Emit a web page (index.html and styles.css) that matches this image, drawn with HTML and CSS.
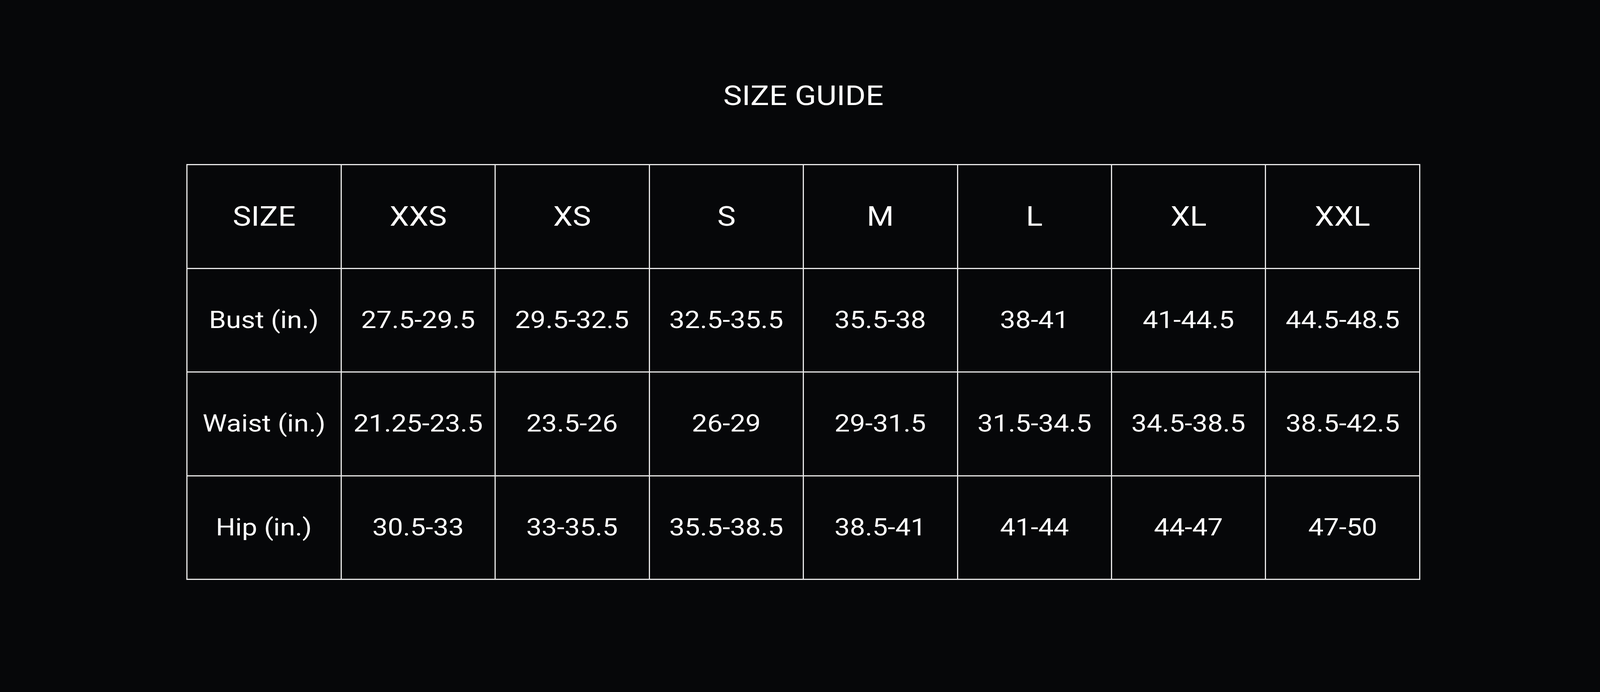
FILE: index.html
```html
<!DOCTYPE html>
<html lang="en">
<head>
<meta charset="utf-8">
<title>Size Guide</title>
<link rel="stylesheet" href="styles.css">
<script src="script.js"></script>
</head>
<body>
<main class="page">
  <h1 class="title"><span class="wide-h">SIZE GUIDE</span></h1>
  <div class="table">
    <div class="cell head"><span class="wide-h">SIZE</span></div>
    <div class="cell head"><span class="wide-h">XXS</span></div>
    <div class="cell head"><span class="wide-h">XS</span></div>
    <div class="cell head"><span class="wide-h">S</span></div>
    <div class="cell head"><span class="wide-h">M</span></div>
    <div class="cell head"><span class="wide-h">L</span></div>
    <div class="cell head"><span class="wide-h">XL</span></div>
    <div class="cell head"><span class="wide-h">XXL</span></div>

    <div class="cell"><span class="wide-b">Bust (in.)</span></div>
    <div class="cell"><span class="wide-b">27.5-29.5</span></div>
    <div class="cell"><span class="wide-b">29.5-32.5</span></div>
    <div class="cell"><span class="wide-b">32.5-35.5</span></div>
    <div class="cell"><span class="wide-b">35.5-38</span></div>
    <div class="cell"><span class="wide-b">38-41</span></div>
    <div class="cell"><span class="wide-b">41-44.5</span></div>
    <div class="cell"><span class="wide-b">44.5-48.5</span></div>

    <div class="cell"><span class="wide-b">Waist (in.)</span></div>
    <div class="cell"><span class="wide-b">21.25-23.5</span></div>
    <div class="cell"><span class="wide-b">23.5-26</span></div>
    <div class="cell"><span class="wide-b">26-29</span></div>
    <div class="cell"><span class="wide-b">29-31.5</span></div>
    <div class="cell"><span class="wide-b">31.5-34.5</span></div>
    <div class="cell"><span class="wide-b">34.5-38.5</span></div>
    <div class="cell"><span class="wide-b">38.5-42.5</span></div>

    <div class="cell"><span class="wide-b">Hip (in.)</span></div>
    <div class="cell"><span class="wide-b">30.5-33</span></div>
    <div class="cell"><span class="wide-b">33-35.5</span></div>
    <div class="cell"><span class="wide-b">35.5-38.5</span></div>
    <div class="cell"><span class="wide-b">38.5-41</span></div>
    <div class="cell"><span class="wide-b">41-44</span></div>
    <div class="cell"><span class="wide-b">44-47</span></div>
    <div class="cell"><span class="wide-b">47-50</span></div>
  </div>
</main>
</body>
</html>
```

FILE: script.js
```js
document.documentElement.style.setProperty('--sx', String(window.innerWidth / 5031));
```

FILE: styles.css
```css
:root {
  --u: calc(100vw / 5031);
  --sx: 1;
  --line: #e9e9e9;
}

html, body {
  margin: 0;
  padding: 0;
  background: #060709;
}

body {
  width: 100vw;
  height: 1772px;
  overflow: hidden;
  color: #ffffff;
  font-family: Roboto, "Liberation Sans", Arial, sans-serif;
  font-weight: 400;
}

.page {
  width: calc(3880 * var(--u));
  margin-left: calc(586 * var(--u));
  padding-top: 210px;
}

.title {
  margin: 0 0 140px;
  height: 70px;
  font-size: 70px;
  line-height: 70px;
  font-weight: 400;
  text-align: center;
  white-space: nowrap;
}

.title .wide-h {
  transform: scaleX(calc(1.41 * var(--sx)));
}

.table {
  display: grid;
  grid-template-columns: repeat(8, 1fr);
  border-top: 3px solid var(--line);
  border-left: 3px solid var(--line);
}

.cell {
  height: 262.5px;
  border-right: 3px solid var(--line);
  border-bottom: 3px solid var(--line);
  display: flex;
  align-items: center;
  justify-content: center;
  font-size: 60.5px;
  line-height: 1;
  white-space: nowrap;
}

.cell.head {
  font-size: 70px;
}

.wide-h {
  display: inline-block;
  transform: scaleX(calc(1.39 * var(--sx)));
  transform-origin: center;
}

.wide-b {
  display: inline-block;
  transform: scaleX(calc(1.42 * var(--sx)));
  transform-origin: center;
}
```
